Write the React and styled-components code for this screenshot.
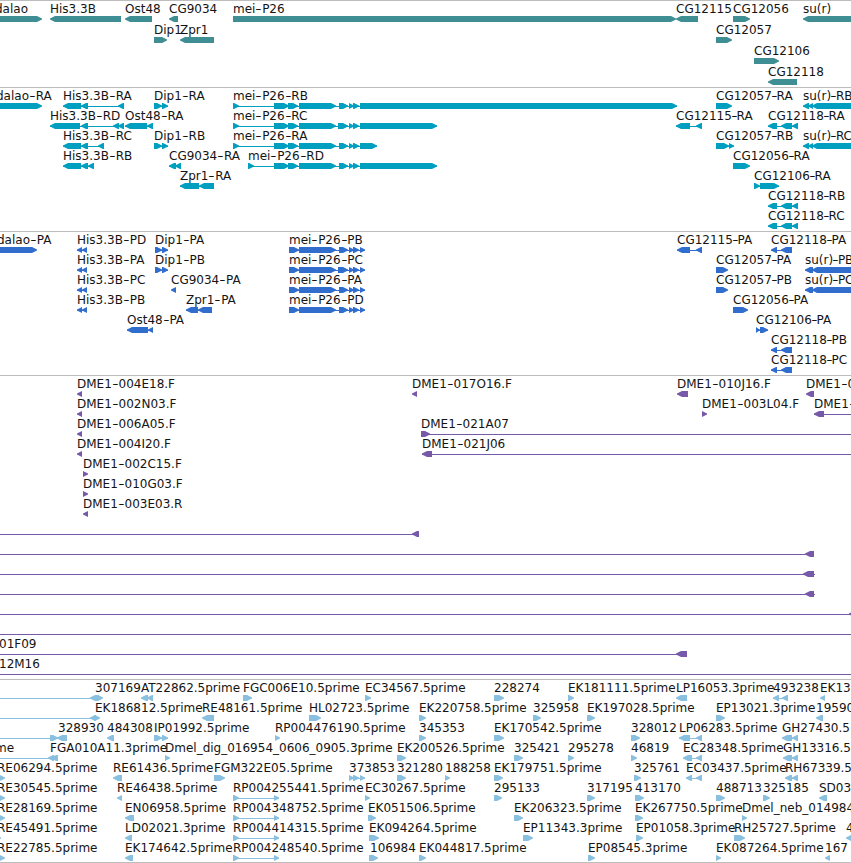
import styled, { createGlobalStyle } from 'styled-components';

const colors = {
  gene: '#3f8e93',
  transcript: '#009fc0',
  protein: '#316dcd',
  bac: '#7759a9',
  est: '#89bfdf',
  rule: '#bdbdbd',
  text: '#141414',
};

const GlobalStyle = createGlobalStyle`
  body {
    margin: 0;
    background: #ffffff;
  }
`;

const Browser = styled.main`
  width: 851px;
  height: 863px;
  box-sizing: border-box;
  display: flex;
  flex-direction: column;
  overflow: hidden;
  background: #ffffff;
  border-bottom: 1px solid ${colors.rule};
`;

const TrackPanel = styled.section`
  box-sizing: border-box;
  height: ${(p) => p.$height}px;
  flex: none;
  padding-top: 3px;
  border-top: 1px solid ${colors.rule};
  color: ${(p) => p.$color};
`;

const LaneRow = styled.div`
  position: relative;
  height: ${(p) => p.$pitch}px;
  display: flex;
  flex-direction: column;
  justify-content: flex-start;
`;

const LabelStrip = styled.div`
  position: relative;
  height: 12px;
  flex: none;
`;

const Label = styled.span`
  position: absolute;
  top: 0;
  color: ${colors.text};
  font-family: 'DejaVu Sans', sans-serif;
  font-size: 12px;
  line-height: 10px;
  white-space: nowrap;
`;

const Dash = styled.span`
  display: inline-block;
  padding: 0 ${(p) => (p.$roomy ? 1.2 : 0.2)}px;
  transform: scaleX(1.45);
`;

const GlyphStrip = styled.svg`
  display: block;
  width: 100%;
  height: 6px;
  flex: none;
  fill: currentColor;
`;

// One feature: label, label start, strand, [start, end] blocks, and the
// extent of the connecting line when it runs past the blocks.
const feat = (label, x, strand, blocks, line) => ({ label, x, strand, blocks, line });

const his = (suffix, tail) => feat(`His3.3B-${suffix}`, 63, '<', [[63, 81], [81, 88], ...tail]);
const hisP = (suffix) => feat(`His3.3B-${suffix}`, 77, '<', [[77, 82], [82, 87]]);
const dip = (suffix) => feat(`Dip1-${suffix}`, 154, '>', [[154, 162], [162, 168]]);
const dipP = (suffix) => feat(`Dip1-${suffix}`, 155, '>', [[155, 162], [162, 168]]);
const mei = (suffix, x, end, third = 339) =>
  feat(`mei-P26-${suffix}`, x, '>', [
    [x, x + 6], [274, 289], [288, 298], [299, 336], [third, 348], [349, 354], [353, 359], [360, end],
  ]);
const meiP = (suffix, third = 339) =>
  feat(`mei-P26-${suffix}`, 289, '>', [[289, 299], [299, 336], [third, 348], [349, 354], [353, 359], [360, 365]]);
const sur = (suffix) => feat(`su(r)-${suffix}`, 803, '<', [[803, 809], [808, 813], [812, 870]]);
const surP = (suffix) => feat(`su(r)-${suffix}`, 805, '<', [[805, 813], [812, 870]]);
const cg118 = (suffix) => feat(`CG12118-${suffix}`, 768, '<', [[768, 777], [781, 792], [792, 798]]);
const cg118P = (suffix) => feat(`CG12118-${suffix}`, 771, '<', [[771, 777], [781, 792]]);
const rp = (label) => feat(label, 233, '>', [[233, 239], [274, 279]]);
const one = (label, strand, start, end, x = start) => feat(label, x, strand, [[start, end]]);
const clone = (strand, start, end, from, to, label = '', x = start) =>
  feat(label, x, strand, [[start, end]], [from, to]);
const span = (label = '', x = 0) => feat(label, x, '<', [], [-10, 860]);

const tracks = [
  {
    id: 'genes',
    color: colors.gene,
    height: 87,
    pitch: 21,
    lanes: [
      [
        one('dalao', '>', -20, 42, -5),
        one('His3.3B', '<', 50, 121),
        one('Ost48', '<', 125, 152),
        one('CG9034', '<', 169, 178),
        one('mei-P26', '>', 233, 676),
        one('CG12115', '<', 676, 698),
        one('CG12056', '>', 733, 750),
        one('su(r)', '<', 803, 870),
      ],
      [one('Dip1', '>', 154, 167), one('Zpr1', '<', 180, 214), one('CG12057', '>', 716, 732)],
      [one('CG12106', '>', 754, 779)],
      [one('CG12118', '<', 768, 797)],
    ],
  },
  {
    id: 'transcripts',
    color: colors.transcript,
    height: 144,
    pitch: 20,
    lanes: [
      [
        one('dalao-RA', '>', -20, 42, -4),
        his('RA', [[118, 124]]),
        dip('RA'),
        mei('RB', 233, 677),
        one('CG12057-RA', '>', 716, 732),
        sur('RB'),
      ],
      [
        feat('His3.3B-RD', 50, '<', [[50, 80], [81, 88], [113, 119], [118, 124]]),
        feat('Ost48-RA', 125, '<', [[125, 147], [147, 153]]),
        mei('RC', 233, 437, 338),
        feat('CG12115-RA', 676, '<', [[676, 690], [696, 702]]),
        cg118('RA'),
      ],
      [
        his('RC', [[98, 104]]),
        dip('RB'),
        mei('RA', 233, 377),
        feat('CG12057-RB', 716, '>', [[716, 729], [729, 734]]),
        sur('RC'),
      ],
      [
        his('RB', [[88, 94]]),
        feat('CG9034-RA', 169, '<', [[169, 176], [175, 181]]),
        mei('RD', 248, 437),
        one('CG12056-RA', '>', 733, 750),
      ],
      [
        feat('Zpr1-RA', 180, '<', [[180, 199], [199, 214]]),
        feat('CG12106-RA', 754, '>', [[754, 760], [760, 779]]),
      ],
      [cg118('RB')],
      [cg118('RC')],
    ],
  },
  {
    id: 'proteins',
    color: colors.protein,
    height: 144,
    pitch: 20,
    lanes: [
      [
        one('dalao-PA', '>', -20, 37, -3),
        hisP('PD'),
        dipP('PA'),
        meiP('PB'),
        feat('CG12115-PA', 677, '<', [[677, 690], [696, 702]]),
        cg118P('PA'),
      ],
      [hisP('PA'), dipP('PB'), meiP('PC', 338), one('CG12057-PA', '>', 716, 728), surP('PB')],
      [hisP('PC'), one('CG9034-PA', '<', 171, 176), meiP('PA'), one('CG12057-PB', '>', 716, 728), surP('PC')],
      [
        hisP('PB'),
        feat('Zpr1-PA', 186, '<', [[186, 198], [198, 212]]),
        meiP('PD'),
        one('CG12056-PA', '>', 733, 748),
      ],
      [
        feat('Ost48-PA', 127, '<', [[127, 148], [148, 153]]),
        feat('CG12106-PA', 756, '>', [[756, 760], [760, 768]]),
      ],
      [cg118P('PB')],
      [cg118P('PC')],
    ],
  },
  {
    id: 'bacs',
    color: colors.bac,
    height: 304,
    pitch: 20,
    lanes: [
      [
        one('DME1-004E18.F', '<', 77, 82),
        one('DME1-017O16.F', '<', 412, 417),
        one('DME1-010J16.F', '<', 677, 688),
        one('DME1-0', '<', 806, 814),
      ],
      [
        one('DME1-002N03.F', '<', 77, 82),
        one('DME1-003L04.F', '>', 702, 707),
        clone('<', 814, 824, 814, 860, 'DME1-'),
      ],
      [one('DME1-006A05.F', '<', 77, 82), clone('>', 421, 430, 421, 860, 'DME1-021A07')],
      [one('DME1-004I20.F', '<', 77, 82), clone('<', 422, 432, 422, 860, 'DME1-021J06')],
      [one('DME1-002C15.F', '>', 83, 88)],
      [one('DME1-010G03.F', '>', 83, 88)],
      [one('DME1-003E03.R', '<', 83, 88)],
      [clone('<', 412, 419, -10, 419)],
      [clone('<', 805, 814, -10, 814)],
      [clone('<', 803, 814, -10, 815)],
      [clone('<', 805, 814, -10, 815)],
      [clone('<', 849, 860, -10, 860)],
      [span()],
      [clone('<', 676, 687, -10, 687, '01F09', -1)],
      [span('12M16', -1)],
    ],
  },
  {
    id: 'ests',
    color: colors.est,
    height: 183,
    pitch: 20,
    lanes: [
      [
        clone('<', 90, 97, -10, 97),
        one('307169', '>', 96, 103, 95),
        feat('AT22862.5prime', 141, '<', [[141, 148], [147, 153]]),
        one('FGC006E10.5prime', '>', 243, 252),
        one('EC34567.5prime', '>', 365, 371),
        one('228274', '>', 494, 504),
        one('EK181111.5prime', '>', 568, 574),
        one('LP16053.3prime', '<', 676, 687),
        feat('493238', 773, '<', [[773, 779], [782, 788]]),
        one('EK13', '<', 820, 825),
      ],
      [
        clone('<', 90, 96, -10, 96),
        one('EK186812.5prime', '>', 94, 100, 95),
        one('RE48161.5prime', '<', 202, 214),
        one('HL02723.5prime', '>', 309, 321),
        one('EK220758.5prime', '>', 419, 426),
        one('325958', '>', 533, 541),
        one('EK197028.5prime', '>', 587, 595),
        one('EP13021.3prime', '>', 716, 725),
        one('19590', '<', 816, 823),
      ],
      [
        clone('>', 50, 58, -10, 58),
        one('328930', '<', 57, 67, 58),
        one('484308', '<', 107, 114),
        feat('IP01992.5prime', 154, '>', [[154, 162], [162, 168]]),
        one('RP004476190.5prime', '>', 275, 280),
        one('345353', '>', 419, 426),
        one('EK170542.5prime', '>', 494, 504),
        one('328012', '>', 631, 640),
        feat('LP06283.5prime', 679, '<', [[679, 690], [696, 702]]),
        feat('GH27430.5', 782, '<', [[782, 792], [792, 798]]),
      ],
      [
        clone('<', 48, 54, -10, 54, 'me', -5),
        one('FGA010A11.3prime', '<', 51, 58, 50),
        one('Dmel_dig_016954_0606_0905.3prime', '>', 165, 170),
        one('EK200526.5prime', '>', 397, 406),
        one('325421', '>', 514, 523),
        one('295278', '>', 568, 574),
        one('46819', '>', 631, 637),
        feat('EC28348.5prime', 683, '<', [[683, 692], [696, 702]]),
        feat('GH13316.5', 783, '<', [[783, 792], [792, 798]]),
      ],
      [
        one('RE06294.5prime', '>', -5, 5, -3),
        one('RE61436.5prime', '<', 113, 122),
        one('FGM322E05.5prime', '>', 214, 225),
        feat('373853', 349, '>', [[349, 354], [353, 359], [360, 365]]),
        one('321280', '>', 397, 406),
        one('188258', '>', 445, 450),
        one('EK179751.5prime', '>', 494, 503),
        one('325761', '>', 634, 641),
        feat('EC03437.5prime', 686, '<', [[686, 692], [696, 702]]),
        feat('RH67339.5', 785, '<', [[785, 792], [792, 798]]),
      ],
      [
        one('RE30545.5prime', '>', -5, 5, -3),
        one('RE46438.5prime', '<', 117, 122),
        rp('RP004255441.5prime'),
        one('EC30267.5prime', '>', 365, 370),
        one('295133', '>', 494, 502),
        one('317195', '>', 587, 595),
        one('413170', '>', 635, 644),
        one('488713', '>', 716, 725),
        one('325185', '>', 763, 770),
        one('SD03', '<', 819, 827),
      ],
      [
        one('RE28169.5prime', '>', -5, 5, -3),
        one('EN06958.5prime', '<', 125, 134),
        rp('RP004348752.5prime'),
        one('EK051506.5prime', '>', 368, 376),
        one('EK206323.5prime', '>', 514, 523),
        one('EK267750.5prime', '>', 635, 643),
        one('Dmel_neb_014984', '>', 742, 747),
      ],
      [
        one('RE45491.5prime', '>', -5, 1, -3),
        one('LD02021.3prime', '<', 125, 132),
        rp('RP004414315.5prime'),
        one('EK094264.5prime', '>', 369, 379),
        one('EP11343.3prime', '>', 523, 533),
        one('EP01058.3prime', '>', 636, 643),
        one('RH25727.5prime', '>', 734, 745),
        one('4', '<', 846, 856),
      ],
      [
        one('RE22785.5prime', '>', -5, 5, -3),
        one('EK174642.5prime', '<', 125, 133),
        rp('RP004248540.5prime'),
        one('106984', '>', 369, 378, 370),
        one('EK044817.5prime', '>', 419, 426),
        one('EP08545.3prime', '>', 588, 595),
        one('EK087264.5prime', '>', 716, 721),
        one('167', '<', 825, 830),
      ],
    ],
  },
];

// Block with a rounded-off arrow head on the side the strand points to
function blockPoints(start, end, strand) {
  const head = Math.min(5, end - start);
  const [tail, tip, dir] = strand === '>' ? [start, end, -1] : [end, start, 1];
  const neck = tip + dir * head;
  const shoulder = tip + dir * 2;
  return `${tail},0 ${neck},0 ${shoulder},1.5 ${tip},2.5 ${tip},3.5 ${shoulder},4.5 ${neck},6 ${tail},6`;
}

function Glyph({ feature }) {
  const { blocks, strand, line } = feature;
  const from = line ? line[0] : blocks[0][0];
  const to = line ? line[1] : blocks[blocks.length - 1][1];
  const hasLine = line || blocks.length > 1;

  return (
    <g>
      {hasLine && <rect x={from} y="3" width={to - from} height="1" />}
      {blocks.map(([start, end]) => (
        <polygon key={start} points={blockPoints(start, end, strand)} />
      ))}
    </g>
  );
}

function FeatureLabel({ text, x }) {
  const parts = text.split('-');
  const roomy = !text.startsWith('CG12') && !text.startsWith('su(r)');

  return (
    <Label style={{ left: x }}>
      {parts.map((part, index) => (
        <span key={index}>
          {index > 0 && <Dash $roomy={roomy}>-</Dash>}
          {part}
        </span>
      ))}
    </Label>
  );
}

function Lane({ features, pitch }) {
  return (
    <LaneRow $pitch={pitch}>
      <LabelStrip>
        {features
          .filter((f) => f.label)
          .map((f) => (
            <FeatureLabel key={f.label} text={f.label} x={f.x} />
          ))}
      </LabelStrip>
      <GlyphStrip>
        {features.map((f, index) => (
          <Glyph key={index} feature={f} />
        ))}
      </GlyphStrip>
    </LaneRow>
  );
}

export default function App() {
  return (
    <>
      <GlobalStyle />
      <Browser>
        {tracks.map((track) => (
          <TrackPanel key={track.id} $height={track.height} $color={track.color}>
            {track.lanes.map((features, index) => (
              <Lane key={index} features={features} pitch={track.pitch} />
            ))}
          </TrackPanel>
        ))}
      </Browser>
    </>
  );
}
